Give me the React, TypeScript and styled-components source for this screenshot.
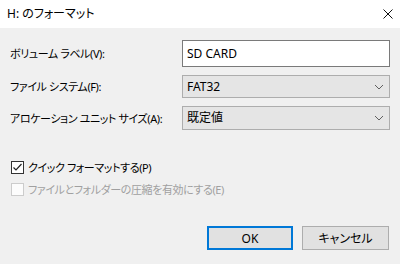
import React from 'react';
import styled, { createGlobalStyle } from 'styled-components';

const GlobalStyle = createGlobalStyle`
  html, body {
    margin: 0;
    padding: 0;
    background: #f0f0f0;
  }
  body {
    font-family: "Noto Sans", "Noto Sans CJK JP", sans-serif;
    font-size: 12px;
    font-feature-settings: "palt";
    color: #000;
  }
`;

const Dialog = styled.div`
  width: 400px;
  height: 264px;
  display: flex;
  flex-direction: column;
  background: #f0f0f0;
  overflow: hidden;
`;

const TitleBar = styled.div`
  height: 28px;
  flex: none;
  background: #fff;
  display: flex;
  align-items: center;
  justify-content: space-between;
  padding: 0 0 0 7px;
  box-sizing: border-box;
`;

const Title = styled.span`
  font-size: 12px;
  line-height: 1;
`;

const CloseButton = styled.button`
  width: 24px;
  height: 24px;
  border: none;
  background: transparent;
  padding: 0;
  display: flex;
  align-items: center;
  justify-content: center;
`;

const Body = styled.div`
  flex: 1;
  display: flex;
  flex-direction: column;
  padding: 12px 10px 0 10px;
`;

const Fields = styled.div`
  display: grid;
  grid-template-columns: 172px 208px;
  row-gap: 8px;
  align-items: center;
`;

const Label = styled.label`
  font-size: 11px;
  letter-spacing: -0.4px;
  line-height: 1;
  white-space: nowrap;
`;

const TextInput = styled.input`
  box-sizing: border-box;
  height: 27px;
  width: 100%;
  margin: 0;
  border: 1px solid #7a7a7a;
  background: #fff;
  padding: 0 4px;
  font: inherit;
  font-size: 12px;
  color: #000;
  outline: none;
`;

const SelectBox = styled.div<{ $tall?: boolean }>`
  box-sizing: border-box;
  height: ${p => (p.$tall ? 24 : 23)}px;
  border: 1px solid #adadad;
  background: #e5e5e5;
  display: flex;
  align-items: center;
  justify-content: space-between;
  padding: 0 5px 0 4px;
`;

const SelectValue = styled.span`
  font-size: 12px;
  line-height: 1;
`;

const Checks = styled.div`
  display: flex;
  flex-direction: column;
  gap: 9px;
  margin-top: 31px;
  padding-left: 1px;
`;

const CheckRow = styled.div<{ $disabled?: boolean }>`
  display: flex;
  align-items: center;
  gap: 4px;
  font-size: 11px;
  letter-spacing: -0.4px;
  color: ${p => (p.$disabled ? '#a0a0a0' : '#000')};
  line-height: 1;
`;

const Box = styled.span<{ $disabled?: boolean }>`
  box-sizing: border-box;
  width: 13px;
  height: 13px;
  border: 1px solid ${p => (p.$disabled ? '#cccccc' : '#333333')};
  background: ${p => (p.$disabled ? '#fcfcfc' : '#fff')};
  display: flex;
  align-items: center;
  justify-content: center;
  flex: none;
`;

const Buttons = styled.div`
  margin-top: auto;
  margin-bottom: 14px;
  display: flex;
  justify-content: flex-end;
  gap: 9px;
  padding-right: 1px;
`;

const Button = styled.button<{ $default?: boolean }>`
  box-sizing: border-box;
  width: ${p => (p.$default ? 86 : 87)}px;
  height: 24px;
  margin: 0;
  font: inherit;
  font-size: 12px;
  color: #000;
  background: #e1e1e1;
  border: ${p => (p.$default ? '2px solid #0078d7' : '1px solid #adadad')};
  padding: 0;
`;

const Chevron = () => (
  <svg width="10" height="6" viewBox="0 0 10 6">
    <path d="M1 1 L5 5 L9 1" fill="none" stroke="#606060" strokeWidth="1" />
  </svg>
);

const Check = () => (
  <svg width="11" height="11" viewBox="0 0 11 11">
    <path d="M1.5 5.5 L4 8 L9.5 2" fill="none" stroke="#222" strokeWidth="1.2" />
  </svg>
);

const App: React.FC = () => {
  return (
    <>
      <GlobalStyle />
      <Dialog>
        <TitleBar>
          <Title>H: のフォーマット</Title>
          <CloseButton aria-label="閉じる">
            <svg width="10" height="10" viewBox="0 0 10 10">
              <path d="M0.5 0.5 L9.5 9.5 M9.5 0.5 L0.5 9.5" stroke="#111" strokeWidth="1" />
            </svg>
          </CloseButton>
        </TitleBar>
        <Body>
          <Fields>
            <Label>ボリューム ラベル(V):</Label>
            <TextInput defaultValue="SD CARD" />
            <Label>ファイル システム(F):</Label>
            <SelectBox>
              <SelectValue>FAT32</SelectValue>
              <Chevron />
            </SelectBox>
            <Label>アロケーション ユニット サイズ(A):</Label>
            <SelectBox $tall>
              <SelectValue>既定値</SelectValue>
              <Chevron />
            </SelectBox>
          </Fields>
          <Checks>
            <CheckRow>
              <Box>
                <Check />
              </Box>
              <span>クイック フォーマットする(P)</span>
            </CheckRow>
            <CheckRow $disabled>
              <Box $disabled />
              <span>ファイルとフォルダーの圧縮を有効にする(E)</span>
            </CheckRow>
          </Checks>
          <Buttons>
            <Button $default>OK</Button>
            <Button>キャンセル</Button>
          </Buttons>
        </Body>
      </Dialog>
    </>
  );
};

export default App;
